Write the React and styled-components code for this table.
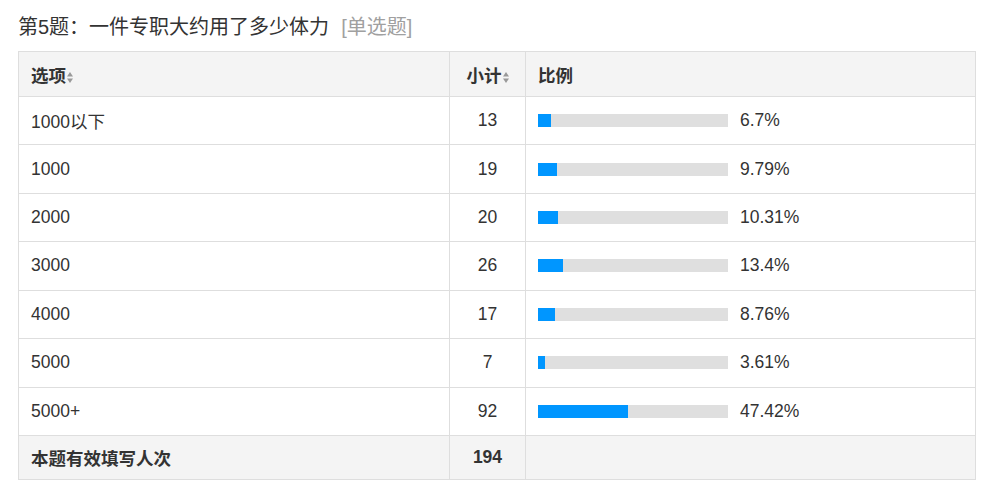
import React from "react";
import styled, { createGlobalStyle } from "styled-components";

const GlobalStyle = createGlobalStyle`
  body {
    margin: 0;
    background: #fff;
    font-family: "Liberation Sans", "Noto Sans CJK SC", sans-serif;
    color: #333;
  }
`;

const Wrapper = styled.div`
  padding: 10px 10px 0 18px;
`;

const Title = styled.div`
  font-size: 20px;
  line-height: 34px;
  height: 34px;
  margin-bottom: 7px;
  color: #333;
  white-space: nowrap;
`;

const TypeTag = styled.span`
  color: #a0a0a0;
  margin-left: 12px;
`;

const Table = styled.table`
  width: 958px;
  border-collapse: collapse;
  table-layout: fixed;
  font-size: 17.5px;
`;

const HeadRow = styled.tr`
  height: 45px;
  background: #f4f4f4;
`;

const BodyRow = styled.tr`
  height: ${(p) => (p.total ? "44px" : "48.43px")};
  background: ${(p) => (p.total ? "#f4f4f4" : "#fff")};
  font-weight: ${(p) => (p.total ? "bold" : "normal")};
`;

const Cell = styled.td`
  border: 1px solid #dedede;
  padding: 0 12px;
  text-align: ${(p) => (p.center ? "center" : "left")};
  vertical-align: middle;
`;

const HeadCell = styled.th`
  border: 1px solid #dedede;
  padding: 0 12px;
  font-weight: bold;
  text-align: ${(p) => (p.center ? "center" : "left")};
  vertical-align: middle;
`;

const SortIcon = styled.svg`
  width: 6px;
  height: 11px;
  margin-left: 1px;
  vertical-align: -1px;
`;

const RatioWrap = styled.div`
  display: flex;
  align-items: center;
`;

const Track = styled.div`
  width: 190px;
  height: 13px;
  background: #dfdfdf;
  display: flex;
`;

const Fill = styled.div`
  height: 100%;
  background: #0096ff;
`;

const Percent = styled.span`
  margin-left: 12px;
`;

const Sort = () => (
  <SortIcon viewBox="0 0 6 11">
    <path d="M3 0 L6 4.5 L0 4.5 Z" fill="#999" />
    <path d="M0 6.5 L6 6.5 L3 11 Z" fill="#999" />
  </SortIcon>
);

const rows = [
  { label: "1000以下", count: 13, pct: 6.7 },
  { label: "1000", count: 19, pct: 9.79 },
  { label: "2000", count: 20, pct: 10.31 },
  { label: "3000", count: 26, pct: 13.4 },
  { label: "4000", count: 17, pct: 8.76 },
  { label: "5000", count: 7, pct: 3.61 },
  { label: "5000+", count: 92, pct: 47.42 },
];

export default function App() {
  return (
    <Wrapper>
      <GlobalStyle />
      <Title>
        第5题：一件专职大约用了多少体力<TypeTag>[单选题]</TypeTag>
      </Title>
      <Table>
        <colgroup>
          <col style={{ width: 431 }} />
          <col style={{ width: 76 }} />
          <col />
        </colgroup>
        <thead>
          <HeadRow>
            <HeadCell>
              选项
              <Sort />
            </HeadCell>
            <HeadCell center>
              小计
              <Sort />
            </HeadCell>
            <HeadCell>比例</HeadCell>
          </HeadRow>
        </thead>
        <tbody>
          {rows.map((r) => (
            <BodyRow key={r.label}>
              <Cell>{r.label}</Cell>
              <Cell center>{r.count}</Cell>
              <Cell>
                <RatioWrap>
                  <Track>
                    <Fill style={{ width: `${r.pct}%` }} />
                  </Track>
                  <Percent>{r.pct}%</Percent>
                </RatioWrap>
              </Cell>
            </BodyRow>
          ))}
          <BodyRow total>
            <Cell>本题有效填写人次</Cell>
            <Cell center>194</Cell>
            <Cell />
          </BodyRow>
        </tbody>
      </Table>
    </Wrapper>
  );
}
